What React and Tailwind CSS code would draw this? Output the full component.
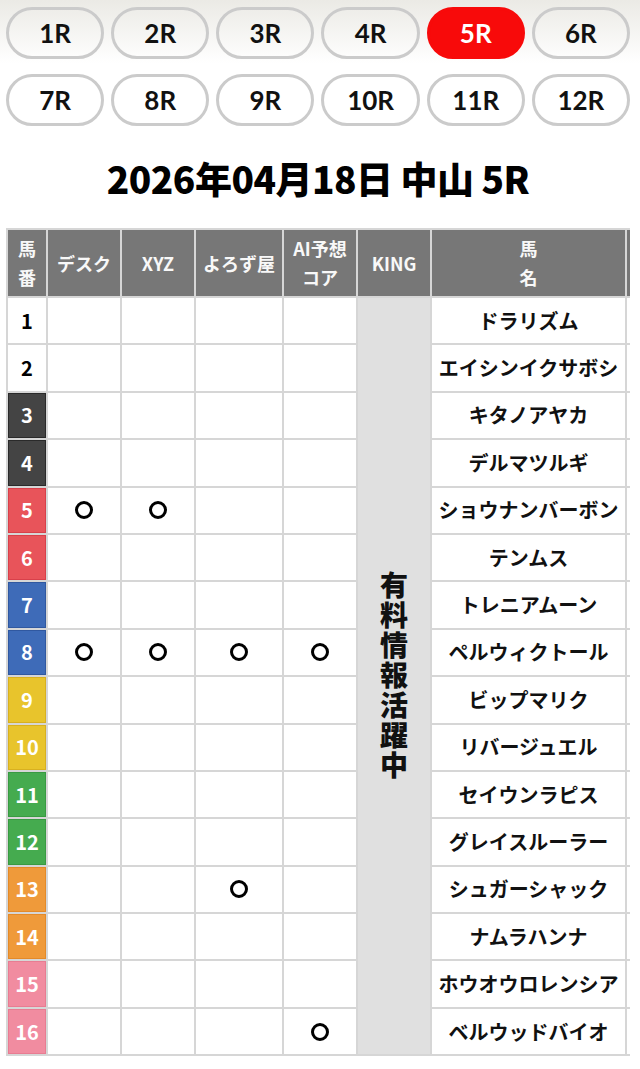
import React from "react";

const races = ["1R","2R","3R","4R","5R","6R","7R","8R","9R","10R","11R","12R"];

const horses = [
  { n: 1, name: "ドラリズム", c: "bg-white text-black", m: [0,0,0,0] },
  { n: 2, name: "エイシンイクサボシ", c: "bg-white text-black", m: [0,0,0,0] },
  { n: 3, name: "キタノアヤカ", c: "bg-[#444444] text-white shadow-[inset_0_0_0_1px_#2a2a2a]", m: [0,0,0,0] },
  { n: 4, name: "デルマツルギ", c: "bg-[#444444] text-white shadow-[inset_0_0_0_1px_#2a2a2a]", m: [0,0,0,0] },
  { n: 5, name: "ショウナンバーボン", c: "bg-[#e8545a] text-white shadow-[inset_0_0_0_1px_#d8404a]", m: [1,1,0,0] },
  { n: 6, name: "テンムス", c: "bg-[#e8545a] text-white shadow-[inset_0_0_0_1px_#d8404a]", m: [0,0,0,0] },
  { n: 7, name: "トレニアムーン", c: "bg-[#3e6bb8] text-white shadow-[inset_0_0_0_1px_#3058a0]", m: [0,0,0,0] },
  { n: 8, name: "ペルウィクトール", c: "bg-[#3e6bb8] text-white shadow-[inset_0_0_0_1px_#3058a0]", m: [1,1,1,1] },
  { n: 9, name: "ビップマリク", c: "bg-[#e8c42c] text-white shadow-[inset_0_0_0_1px_#d8b020]", m: [0,0,0,0] },
  { n: 10, name: "リバージュエル", c: "bg-[#e8c42c] text-white shadow-[inset_0_0_0_1px_#d8b020]", m: [0,0,0,0] },
  { n: 11, name: "セイウンラピス", c: "bg-[#45ab4f] text-white shadow-[inset_0_0_0_1px_#389a42]", m: [0,0,0,0] },
  { n: 12, name: "グレイスルーラー", c: "bg-[#45ab4f] text-white shadow-[inset_0_0_0_1px_#389a42]", m: [0,0,0,0] },
  { n: 13, name: "シュガーシャック", c: "bg-[#ef9a3a] text-white shadow-[inset_0_0_0_1px_#e48a28]", m: [0,0,1,0] },
  { n: 14, name: "ナムラハンナ", c: "bg-[#ef9a3a] text-white shadow-[inset_0_0_0_1px_#e48a28]", m: [0,0,0,0] },
  { n: 15, name: "ホウオウロレンシア", c: "bg-[#f18ca0] text-white shadow-[inset_0_0_0_1px_#e87c92]", m: [0,0,0,0] },
  { n: 16, name: "ベルウッドバイオ", c: "bg-[#f18ca0] text-white shadow-[inset_0_0_0_1px_#e87c92]", m: [0,0,0,1] },
];

function Mark() {
  return <span className="block w-[18px] h-[18px] rounded-full border-[3px] border-black" aria-label="○" />;
}

export default function App() {
  return (
    <div className="min-h-[1069px] bg-white font-['Noto_Sans_CJK_JP',sans-serif] text-black">
      <div className="bg-gradient-to-b from-[#ebeae5] via-white to-white pl-[6px] pr-[10px] pt-[7px]">
        <div className="grid grid-cols-6 gap-x-[7px] gap-y-[15px]">
          {races.map((r) => (
            <div
              key={r}
              className={
                r === "5R"
                  ? "h-[52px] rounded-full bg-[#f80a0a] border-[3px] border-[#f80a0a] flex items-center justify-center text-white text-[26px] font-bold font-['Lato','Noto_Sans_CJK_JP',sans-serif]"
                  : "h-[52px] rounded-full border-[3px] border-[#cbcbcb] flex items-center justify-center text-[#111] text-[26px] font-bold font-['Lato','Noto_Sans_CJK_JP',sans-serif]"
              }
            >
              {r}
            </div>
          ))}
        </div>
      </div>

      <div className="pl-[6px] pr-[10px]">
        <h1 className="mt-[30px] h-[44px] leading-[44px] text-center text-[37px] font-black tracking-[-0.5px]">
          2026年04月18日 中山 5R
        </h1>

        <div className="mt-[28px] overflow-hidden">
          <div className="grid w-[703px] grid-cols-[38px_72px_72px_86px_72px_72px_193px_80px] grid-rows-[66px_repeat(16,45.4px)] gap-[2px] p-[2px] bg-[#d6d6d6]">
            <div className="bg-[#777777] text-[#f8f8f8] text-[18px] font-bold leading-[29px] flex flex-col items-center justify-center">
              <span>馬</span><span>番</span>
            </div>
            <div className="bg-[#777777] text-[#f8f8f8] text-[18px] font-bold flex items-center justify-center">デスク</div>
            <div className="bg-[#777777] text-[#f8f8f8] text-[18px] font-bold flex items-center justify-center">XYZ</div>
            <div className="bg-[#777777] text-[#f8f8f8] text-[18px] font-bold flex items-center justify-center">よろず屋</div>
            <div className="bg-[#777777] text-[#f8f8f8] text-[18px] font-bold leading-[29px] flex flex-col items-center justify-center">
              <span>AI予想</span><span>コア</span>
            </div>
            <div className="bg-[#777777] text-[#f8f8f8] text-[18px] font-bold flex items-center justify-center">KING</div>
            <div className="bg-[#777777] text-[#f8f8f8] text-[18px] font-bold leading-[29px] flex flex-col items-center justify-center">
              <span>馬</span><span>名</span>
            </div>
            <div className="bg-[#777777]"></div>

            <div className="col-start-6 row-start-2 row-span-16 bg-[#e0e0e0] flex items-center justify-center">
              <span className="[writing-mode:vertical-rl] text-[28px] font-black tracking-[2px] leading-none text-[#111]">
                有料情報活躍中
              </span>
            </div>

            {horses.map((h) => (
              <React.Fragment key={h.n}>
                <div className={`${h.c} flex items-center justify-center text-[20px] font-bold`}>{h.n}</div>
                {h.m.map((v, i) => (
                  <div key={i} className="bg-white flex items-center justify-center">
                    {v ? <Mark /> : null}
                  </div>
                ))}
                <div className="bg-white flex items-center justify-center text-[20px] font-bold text-[#111] whitespace-nowrap">
                  {h.name}
                </div>
                <div className="bg-white"></div>
              </React.Fragment>
            ))}
          </div>
        </div>
      </div>
    </div>
  );
}
